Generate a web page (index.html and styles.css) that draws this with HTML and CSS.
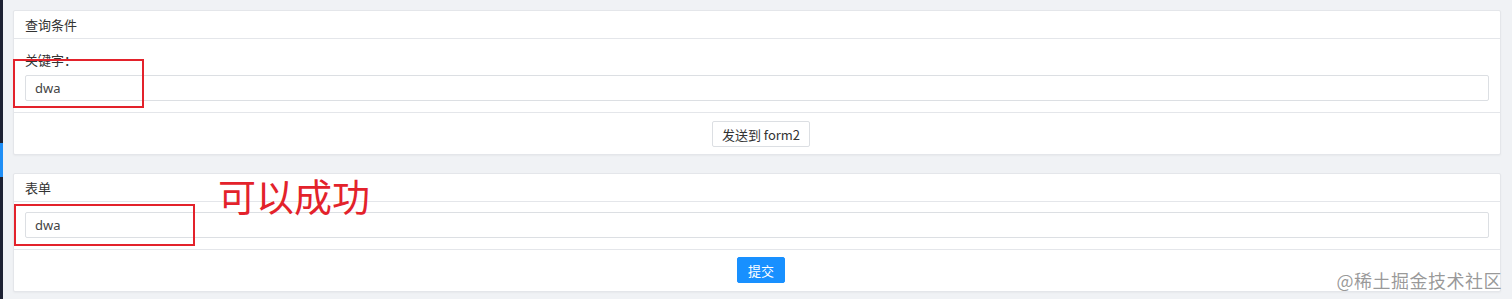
FILE: index.html
```html
<!DOCTYPE html>
<html lang="zh-CN">
<head>
    <meta charset="UTF-8">
    <meta name="viewport" content="width=device-width, initial-scale=1.0">
    <title>表单传值</title>
    <link rel="stylesheet" href="styles.css">
</head>
<body>
    <aside class="side-strip">
        <div class="side-active"></div>
    </aside>

    <main class="page">
        <section class="card">
            <div class="card-header">查询条件</div>
            <div class="card-body card-body-query">
                <label class="field-label" for="keyword">关键字：</label>
                <input class="field-input" type="text" id="keyword" value="dwa">
            </div>
            <div class="card-footer">
                <button class="btn" type="button">发送到 form2</button>
            </div>
        </section>

        <section class="card">
            <div class="card-header">表单</div>
            <div class="card-body card-body-form">
                <input class="field-input" type="text" value="dwa">
            </div>
            <div class="card-footer card-footer-form">
                <button class="btn btn-primary" type="submit">提交</button>
            </div>
        </section>

        <!-- annotations drawn over the screenshot -->
        <div class="mark mark-1"></div>
        <div class="mark mark-2"></div>
        <div class="mark-text">可以成功</div>
        <div class="watermark">@稀土掘金技术社区</div>
    </main>
</body>
</html>
```

FILE: styles.css
```css
:root {
    --bg-color: #f0f2f5;
    --border-color: #e4e6ea;
    --text-color: #333;
    --primary-color: #1890ff;
    --mark-color: #e3222b;
}

* {
    box-sizing: border-box;
    margin: 0;
    padding: 0;
}

body {
    font-family: "Noto Sans CJK SC", "Liberation Sans", sans-serif;
    font-size: 13px;
    color: var(--text-color);
    background: var(--bg-color);
    display: flex;
    height: 299px;
    overflow: hidden;
}

.side-strip {
    width: 3px;
    flex-shrink: 0;
    background: #1d2133;
    padding-top: 143px;
}

.side-active {
    height: 34px;
    background: #1f8ef5;
}

.page {
    flex: 1;
    position: relative;
    padding: 10px 11px 0 10px;
    display: flex;
    flex-direction: column;
    gap: 18px;
}

.card {
    background: #fff;
    border: 1px solid var(--border-color);
    border-radius: 2px;
    box-shadow: 0 1px 2px rgba(0, 0, 0, 0.04);
}

.card-header {
    height: 28px;
    line-height: 27px;
    padding: 0 11px;
    border-bottom: 1px solid var(--border-color);
}

.card-body {
    padding: 0 11px;
    border-bottom: 1px solid var(--border-color);
}

.card-body-query {
    padding-top: 11px;
    padding-bottom: 11px;
}

.card-body-form {
    padding-top: 10px;
    padding-bottom: 11px;
}

.field-label {
    display: block;
    height: 20px;
    line-height: 20px;
    margin-bottom: 5px;
}

.field-input {
    display: block;
    width: 100%;
    height: 26px;
    padding: 0 9px;
    border: 1px solid #dcdfe3;
    border-radius: 2px;
    font-family: "Noto Sans", "Liberation Sans", sans-serif;
    font-size: 13px;
    color: #444;
    background: #fff;
}

.card-footer {
    display: flex;
    justify-content: center;
    padding: 8px 0 7px;
    margin-left: 8px;
}

.card-footer-form {
    padding: 7px 0 8px;
}

.btn {
    height: 26px;
    padding: 0 9px;
    border: 1px solid #dcdfe3;
    border-radius: 2px;
    background: #fff;
    color: #333;
    font-family: "Noto Sans CJK SC", "Noto Sans", sans-serif;
    font-size: 13px;
    cursor: pointer;
}

.btn-primary {
    background: var(--primary-color);
    border-color: var(--primary-color);
    color: #fff;
    padding: 0 10px;
}

.mark {
    position: absolute;
    border: 2px solid var(--mark-color);
}

.mark-1 {
    left: 10px;
    top: 59px;
    width: 131px;
    height: 49px;
}

.mark-2 {
    left: 11px;
    top: 204px;
    width: 181px;
    height: 42px;
}

.mark-text {
    position: absolute;
    left: 215px;
    top: 169px;
    font-size: 38px;
    line-height: 52px;
    color: var(--mark-color);
}

.watermark {
    position: absolute;
    right: 10px;
    bottom: 6px;
    font-size: 18px;
    color: rgba(120, 120, 120, 0.75);
    letter-spacing: 0.5px;
}
```
